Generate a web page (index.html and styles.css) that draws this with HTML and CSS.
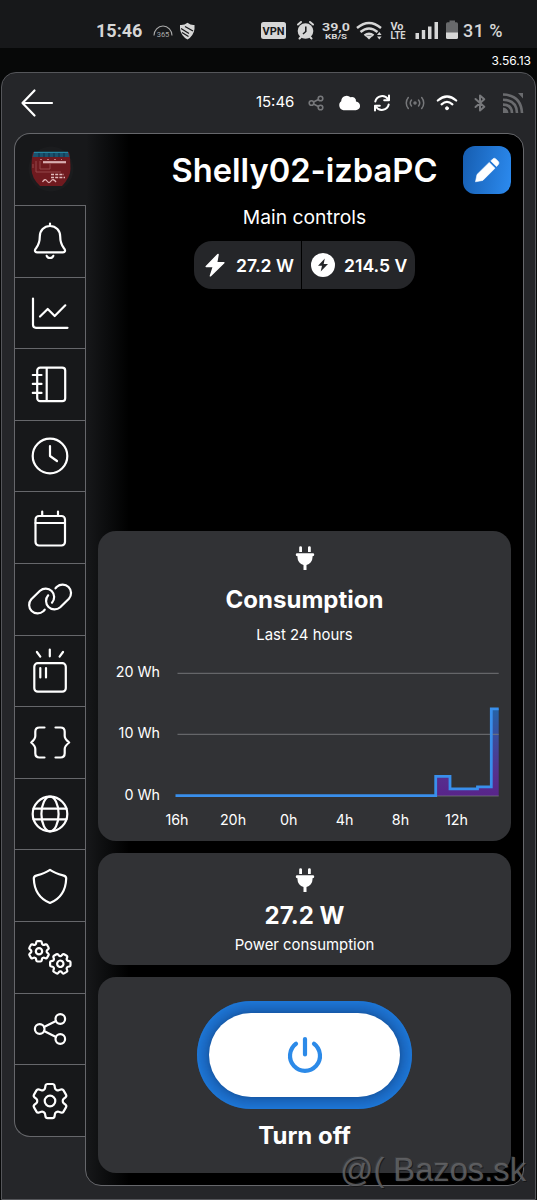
FILE: index.html
```html
<!DOCTYPE html>
<html lang="en">
<head>
<meta charset="utf-8">
<title>Shelly02-izbaPC</title>
<link rel="stylesheet" href="styles.css">
</head>
<body>
<svg width="0" height="0" class="defs" aria-hidden="true">
  <symbol id="gear" viewBox="0 0 24 24" overflow="visible">
    <path vector-effect="non-scaling-stroke" d="M9.594 3.94c.09-.542.56-.94 1.11-.94h2.593c.55 0 1.02.398 1.11.94l.213 1.281c.063.374.313.686.645.87.074.04.147.083.22.127.325.196.72.257 1.075.124l1.217-.456a1.125 1.125 0 0 1 1.37.49l1.296 2.247a1.125 1.125 0 0 1-.26 1.431l-1.003.827c-.293.241-.438.613-.43.992a7.723 7.723 0 0 1 0 .255c-.008.378.137.75.43.991l1.004.827c.424.35.534.955.26 1.43l-1.298 2.247a1.125 1.125 0 0 1-1.369.491l-1.217-.456c-.355-.133-.75-.072-1.076.124a6.47 6.47 0 0 1-.22.128c-.331.183-.581.495-.644.869l-.213 1.281c-.09.543-.56.94-1.11.94h-2.594c-.55 0-1.019-.398-1.11-.94l-.213-1.281c-.062-.374-.312-.686-.644-.87a6.52 6.52 0 0 1-.22-.127c-.325-.196-.72-.257-1.076-.124l-1.217.456a1.125 1.125 0 0 1-1.369-.49l-1.297-2.247a1.125 1.125 0 0 1 .26-1.431l1.004-.827c.292-.24.437-.613.43-.991a6.932 6.932 0 0 1 0-.255c.007-.38-.138-.751-.43-.992l-1.004-.827a1.125 1.125 0 0 1-.26-1.43l1.297-2.247a1.125 1.125 0 0 1 1.37-.491l1.216.456c.356.133.751.072 1.076-.124.072-.044.146-.086.22-.128.332-.183.582-.495.644-.869l.214-1.28Z"/>
    <circle vector-effect="non-scaling-stroke" cx="12" cy="12" r="2.8"/>
  </symbol>
  <symbol id="plug" viewBox="0 0 24 24">
    <path d="M6.2 6V1.600a1.400 1.400 0 0 1 2.800 0V6zM15 6V1.600a1.400 1.400 0 0 1 2.800 0V6zM4.200 7.300H19.800a1.450 1.450 0 0 1 0 2.900H19.500V11.500A7.500 7.500 0 0 1 13.500 18.900V24H10.500V18.900A7.500 7.500 0 0 1 4.500 11.500V10.200H4.200a1.450 1.450 0 0 1 0-2.900z"/>
  </symbol>
</svg>

<div class="statusbar">
  <span class="clock">15:46</span>
  <svg class="status-left" width="44" height="20" viewBox="0 0 44 20">
    <path d="M2 14.500A9 9.500 0 0 1 20 14.500" fill="none" stroke="#aaa" stroke-width="1.100"/>
    <text x="11" y="16.200" text-anchor="middle" class="tiny">365</text>
    <path d="M28 4Q32 4.500 35.500 1.800Q39 4.500 42.500 4V8Q41.500 15 35.500 18.500Q29 15 28 8Z" fill="#d6d6d6"/>
    <path d="M29 7.500L37 12.500M33 5.500L41 10M30 11.500L36.500 15.500" stroke="#17181a" stroke-width="1.300"/>
  </svg>
  <svg class="status-right" width="200" height="24" viewBox="260 19 200 24">
    <rect x="261" y="22" width="25" height="17" rx="2.500" fill="#d6d6d6"/>
    <text x="273.500" y="35" text-anchor="middle" class="vpn">VPN</text>
    <g fill="none" stroke="#d6d6d6" stroke-width="2" stroke-linecap="round">
      <path d="M298 24.500L301 22M313 24.500L310 22M299.500 38.500L301 37M311.500 38.500L310 37"/>
    </g>
    <circle cx="305.500" cy="31" r="7.800" fill="#d6d6d6"/>
    <path d="M305.800 26.500V31.500L303 34" fill="none" stroke="#17181a" stroke-width="1.500"/>
    <text x="336" y="30.500" text-anchor="middle" class="rate" textLength="28" lengthAdjust="spacingAndGlyphs">39,0</text>
    <text x="336" y="39.300" text-anchor="middle" class="rate-unit" textLength="22" lengthAdjust="spacingAndGlyphs">KB/S</text>
    <g fill="none" stroke="#d6d6d6" stroke-width="2.400">
      <path d="M357 28Q369 18 381 28M360.500 32Q369 25 377.500 32M364.500 35.500Q369 32 373.500 35.500"/>
    </g>
    <path d="M365 35.500H373L369 39.500ZM377 35L379.300 32L381.600 35ZM377 36.500L379.300 39.500L381.600 36.500Z" fill="#d6d6d6"/>
    <text x="397" y="30" text-anchor="middle" class="lte" textLength="13" lengthAdjust="spacingAndGlyphs">Vo</text>
    <text x="398" y="39.200" text-anchor="middle" class="lte" textLength="15" lengthAdjust="spacingAndGlyphs">LTE</text>
    <path d="M415.500 33H419V39H415.500ZM421.800 30H425.200V39H421.800ZM428 26.500H431.500V39H428ZM434.500 22H438V39H434.500Z" fill="#d6d6d6"/>
    <path d="M449.500 20.500H455V22.300H456.500Q458 22.300 458 24V33H446V24Q446 22.300 447.500 22.300H449.500Z" fill="#68696b"/>
    <path d="M446 32.500H458V37.500Q458 39 456.500 39H447.500Q446 39 446 37.500Z" fill="#d6d6d6"/>
  </svg>
  <span class="battery">31 %</span>
</div>

<div class="version">3.56.13</div>

<div class="sheet">
  <header class="topbar">
    <svg width="34" height="30" viewBox="0 0 34 30" class="line"><path stroke-width="2.200" d="M32 15H2.500M14.500 2.500L2.500 15L14.500 27.500"/></svg>
    <div class="indicators">
      <span class="time">15:46</span>
      <svg viewBox="0 0 24 24" class="line dim"><g stroke-width="1.600"><circle cx="7.500" cy="12" r="2.300"/><circle cx="16.500" cy="7.500" r="2.300"/><circle cx="16.500" cy="16.500" r="2.300"/><path d="M9.500 11L14.400 8.500M9.500 13L14.400 15.500"/></g></svg>
      <svg viewBox="0 0 24 24" class="solid"><path d="M6.500 19.200A5 5 0 0 1 4.200 10.300A5.500 5.500 0 0 1 13.500 6.300A4 4 0 0 1 19 10.600A4.300 4.300 0 0 1 18.500 19.200Z"/></svg>
      <svg viewBox="0 0 24 24" class="line"><g stroke-width="2"><path d="M5.300 10.500A7 7 0 0 1 18 8.300M18.700 13.500A7 7 0 0 1 6 15.700"/><path d="M19 4.500V9.300H14.200M5 19.500V14.700H9.800"/></g></svg>
      <svg viewBox="0 0 24 24" class="line dim"><g stroke-width="1.500"><path d="M5.300 6.500A8.500 8.500 0 0 0 5.300 17.500M18.700 6.500A8.500 8.500 0 0 1 18.700 17.500M8.500 9A4.700 4.700 0 0 0 8.500 15M15.500 9A4.700 4.700 0 0 1 15.500 15"/><circle cx="12" cy="12" r="1"/></g></svg>
      <svg viewBox="0 0 24 24" class="line"><g stroke-width="2.200"><path d="M2.800 9.500Q12 1.500 21.200 9.500M6.600 13.300Q12 8.600 17.400 13.300"/></g><circle cx="12" cy="17.300" r="1.500" class="fillwhite"/></svg>
      <svg viewBox="0 0 24 24" class="line dim"><path stroke-width="2" d="M7.500 8L16.300 15.800L12 19.500V4.500L16.300 8.200L7.500 16"/></svg>
      <svg viewBox="0 0 24 24" class="rss"><g fill="none" stroke="#6a6b6e" stroke-width="2.600"><path d="M2 3.500Q20 4 21 22M2 8.800Q15.500 9 16 22M2 13.600Q10.500 13.500 11 22"/></g><path fill="#6a6b6e" d="M2 16.500Q7 17 7.500 22H2ZM17 2H22V7.500Z"/></svg>
    </div>
  </header>

  <div class="device">
    <nav class="rail">
      <div class="avatar">
        <svg width="48" height="48" viewBox="0 0 48 48">
          <circle cx="24" cy="24" r="22.500" fill="#1b1c1e"/>
          <path d="M6 7H42Q43.500 13 43.500 24Q43.500 32 35 41H13Q4.500 33 4.500 24Q4.500 13 6 7Z" fill="#6f1a1f"/>
          <path d="M7 7H41L42.500 12H5.500Z" fill="#1c536e"/>
          <path d="M7 7.300H41" stroke="#2791ad" stroke-width="1"/>
          <path d="M12 8V12M17 8V12M22 8V12M27 8V12M32 8V12M37 8V12" stroke="#123b55" stroke-width="1.500"/>
          <path d="M16 17.200H39" stroke="#d9adb0" stroke-width="2.200"/>
          <path d="M13 14.500H35" stroke="#bd767a" stroke-width="1" stroke-dasharray="2 5"/>
          <path d="M9 16V27H34M13 16V24H23V18M6 19V23" fill="none" stroke="#94474b" stroke-width="1"/>
          <path d="M24 29.500H37M24 32.500H38" stroke="#e0bcbd" stroke-width="1.700" stroke-dasharray="3 1.200"/>
          <path d="M15.500 37Q18 33 20 36T24 36T29 37" fill="none" stroke="#dfb2b4" stroke-width="1.300"/>
        </svg>
      </div>
      <a class="tab"><svg viewBox="0 0 48 48"><path d="M24 6.500V9M24 9C18 9 13.800 13.500 13.800 19.500C13.800 26 12.500 28 10.200 31C8 33.500 9 35.300 11 35.300H37C39 35.300 40 33.500 37.800 31C35.500 28 34.200 26 34.200 19.500C34.200 13.500 30 9 24 9ZM20.700 38.800A3.500 3.300 0 0 0 27.300 38.800"/></svg></a>
      <a class="tab"><svg viewBox="0 0 48 48"><path d="M7 9.500V35.800Q7 38.800 10 38.800H41.500M14 27.500L21.700 20L28.700 27L39.300 16.300"/></svg></a>
      <a class="tab"><svg viewBox="0 0 48 48"><rect x="11.200" y="7.600" width="28" height="33.600" rx="3"/><path d="M20.700 8V41M6.800 15H15.500M6.800 23.900H15.500M6.800 32.900H15.500"/></svg></a>
      <a class="tab"><svg viewBox="0 0 48 48"><circle cx="24" cy="24" r="17.300"/><path d="M24 14V24L31 29"/></svg></a>
      <a class="tab"><svg viewBox="0 0 48 48"><rect x="9.500" y="12" width="29.500" height="29.500" rx="3.500"/><path d="M9.500 19H39M16.200 7.500V12M32 7.500V12"/></svg></a>
      <a class="tab"><svg viewBox="0 0 48 48"><path d="M18.700 34.700L17.300 36.300A8.500 8.500 0 0 1 5.300 24.300L14 15.700A8.500 8.500 0 0 1 26 27.700M29.500 13.300L30.900 11.700A8.500 8.500 0 0 1 42.900 23.700L34.200 32.300A8.500 8.500 0 0 1 22.200 20.300"/></svg></a>
      <a class="tab"><svg viewBox="0 0 48 48"><rect x="8.300" y="16.200" width="31.500" height="28.500" rx="3.500"/><path d="M14.300 21V30.500M20 21V30.500M23.800 2.500V9.300M10.900 5L14.300 9.700M37 5L33.600 9.700"/></svg></a>
      <a class="tab"><svg viewBox="0 0 48 48"><path d="M18.500 9.500H13.500Q9.300 9.500 9.300 13.700V18Q9.300 21 5.200 24.500Q9.300 28 9.300 31V35.300Q9.300 39.500 13.500 39.500H18.500M29.500 9.500H34.500Q38.700 9.500 38.700 13.700V18Q38.700 21 43.200 24.500Q38.700 28 38.700 31V35.300Q38.700 39.500 34.500 39.500H29.500"/></svg></a>
      <a class="tab"><svg viewBox="0 0 48 48"><circle cx="24" cy="24" r="17.300"/><ellipse cx="24" cy="24" rx="8.600" ry="17.300"/><path d="M7.500 18.700H40.500M7.500 29.300H40.500"/></svg></a>
      <a class="tab"><svg viewBox="0 0 48 48"><path d="M24 7.800C19 11.200 14 12.500 10.200 13.600Q7.800 14.300 7.800 16.500C8.200 28 14 37 24 41C34 37 39.800 28 40.200 16.500Q40.200 14.300 37.800 13.600C34 12.500 29 11.200 24 7.800Z"/></svg></a>
      <a class="tab"><svg viewBox="0 0 48 48"><use href="#gear" x="-.6" y="4.700" width="27.200" height="27.200"/><g transform="rotate(30 34.300 30.800)"><use href="#gear" x="20.700" y="17.200" width="27.200" height="27.200"/></g></svg></a>
      <a class="tab"><svg viewBox="0 0 48 48"><circle cx="13.700" cy="24" r="4.800"/><circle cx="34.300" cy="14" r="4.800"/><circle cx="34.300" cy="34" r="4.800"/><path d="M18 21.900L30 16.100M18 26.100L30 31.900"/></svg></a>
      <a class="tab last"><svg viewBox="0 0 48 48"><use href="#gear" x="1.300" y="1.300" width="45.400" height="45.400"/></svg></a>
    </nav>

    <main class="panel">
      <div class="heading">
        <h1>Shelly02-izbaPC</h1>
        <button class="edit"><svg width="28" height="28" viewBox="0 0 28 28"><path fill="#fff" stroke="#fff" stroke-width=".6" stroke-linejoin="round" d="M2.500 25.800L4 18.500L16.200 6.400L22 12.200L9.800 24.400ZM17.800 4.900L19.800 2.900Q21.300 1.600 22.800 2.900L25.300 5.400Q26.700 7 25.300 8.600L23.500 10.600Z"/></svg></button>
      </div>
      <p class="subtitle">Main controls</p>
      <div class="meters">
        <div class="meter first"><svg width="24" height="24" viewBox="0 0 24 24"><path fill="#fff" stroke="#fff" stroke-width="1.600" stroke-linejoin="round" d="M15 1.500L3.300 13.500H10.500L7.500 22.800L20.800 9.800H13.500Z"/></svg><span>27.2 W</span></div>
        <div class="meter second"><svg width="24" height="24" viewBox="0 0 24 24"><circle cx="12" cy="12" r="12" fill="#fff"/><path fill="#252629" d="M13.800 5.500L7 12.800H11L9.700 18.500L17 11H12.700Z"/></svg><span>214.5 V</span></div>
      </div>

      <section class="card consumption">
        <svg class="plug" width="24" height="24"><use href="#plug"/></svg>
        <h2>Consumption</h2>
        <p>Last 24 hours</p>
        <svg class="chart" width="413" height="180" viewBox="98 660 413 180">
          <defs><linearGradient id="usage" gradientUnits="userSpaceOnUse" x1="0" y1="708" x2="0" y2="796"><stop offset="0" stop-color="#2464a8"/><stop offset=".75" stop-color="#56308e"/><stop offset="1" stop-color="#58248a"/></linearGradient></defs>
          <path fill="url(#usage)" d="M435.500 796V776.300H450V788.800H477.500V786.800H491.300V708.700H498.700V796Z"/>
          <path stroke="#77787b" stroke-opacity=".75" stroke-width="1.200" d="M177.500 673.400H498.700M177.500 734.400H498.700M177.500 796H498.700"/>
          <path fill="none" stroke="#398fec" stroke-width="2.800" d="M175.500 795.600H435.700V776.300H450V788.800H477.500V786.800H491.300V708.900H498.700"/>
          <g text-anchor="end"><text x="160" y="677.200">20 Wh</text><text x="160" y="738.400">10 Wh</text><text x="160" y="800">0 Wh</text></g>
          <g text-anchor="middle"><text x="177" y="825.200">16h</text><text x="233" y="825.200">20h</text><text x="288.700" y="825.200">0h</text><text x="344.500" y="825.200">4h</text><text x="400.500" y="825.200">8h</text><text x="456.500" y="825.200">12h</text></g>
        </svg>
      </section>

      <section class="card power">
        <svg class="plug" width="24" height="24"><use href="#plug"/></svg>
        <h2>27.2 W</h2>
        <p>Power consumption</p>
      </section>

      <section class="card switch">
        <button class="toggle"><span class="knob"><svg width="40" height="40" viewBox="0 0 40 40"><path fill="none" stroke="#2c8ae8" stroke-width="4.200" stroke-linecap="round" d="M20 4V19.500M11 8.800A15 15 0 1 0 29 8.800"/></svg></span></button>
        <h2>Turn off</h2>
      </section>
    </main>
  </div>
</div>
<div class="watermark">@( Bazos.sk</div>
</body>
</html>
```
FILE: styles.css
```css
* { box-sizing: border-box; }
body { margin: 0; width: 537px; height: 1200px; overflow: hidden; position: relative; background: #070808; color: #fff; font-family: Inter, sans-serif; display: flex; flex-direction: column; }
.defs { position: absolute; }
h1, h2, p { margin: 0; }
button { border: 0; padding: 0; }

.statusbar { height: 48px; flex: none; background: #17181a; display: flex; align-items: flex-end; padding: 0 30px 5px 96px; color: #d6d6d6; font: 700 18px/24px Roboto, sans-serif; }
.clock { width: 56px; }
.status-left { margin-bottom: 2px; }
.status-right { margin-left: 64px; margin-bottom: 0; flex: none; }
.battery { margin-left: 3px; font-weight: 500; white-space: nowrap; letter-spacing: .4px; }
.tiny { font: 7.5px Roboto, sans-serif; fill: #aaa; }
.vpn { font: 700 11px Roboto, sans-serif; fill: #17181a; }
.rate { font: 700 11px Roboto, sans-serif; fill: #d6d6d6; }
.rate-unit { font: 700 8px Roboto, sans-serif; fill: #d6d6d6; }
.lte { font: 700 10px Roboto, sans-serif; fill: #d6d6d6; }

.version { height: 24px; flex: none; padding-right: 6px; text-align: right; font-size: 12px; line-height: 26px; }

.sheet { flex: 1; margin: 0 1px 0 1px; border: 1.500px solid #55565a; border-radius: 15px 15px 0 0; background: #252629; padding: 0 11px 0 12px; }
.topbar { height: 60px; display: flex; align-items: center; justify-content: space-between; padding: 0 0 0 6px; }
.line { fill: none; stroke: #fff; stroke-linecap: round; stroke-linejoin: round; }
.dim { stroke: #77787b; }
.solid, .line .fillwhite { fill: #fff; }
.indicators { display: flex; align-items: center; gap: 8.800px; margin-right: -1px; }
.indicators svg { width: 24px; height: 24px; }
.time { font-size: 15px; margin-right: 1px; line-height: 20px; margin-top: -2px; }

.device { display: flex; align-items: flex-start; height: 1053px; }
.rail { width: 71px; flex: none; }
.avatar { position: relative; z-index: 1; height: 72px; width: 73px; border: solid #66676b; border-width: 1px 0 0 1px; border-radius: 16px 0 0 0; background: #17181a; padding: 11px 0 0 12px; }
.tab { display: grid; place-items: center; height: 71.600px; border: solid #66676b; border-width: 1px 0 0 1px; background: #17181a; }
.tab svg { width: 48px; height: 48px; fill: none; stroke: #fff; stroke-width: 2.200; stroke-linecap: round; stroke-linejoin: round; overflow: visible; }
.tab.last { border-bottom-width: 1px; border-bottom-left-radius: 16px; height: 73px; }

.panel { flex: 1; height: 1053px; border: 1px solid #66676b; border-radius: 0 16px 16px 16px; background: linear-gradient(90deg, #17181a 0, #0b0c0d 22px, #000 43px); padding: 12px; display: flex; flex-direction: column; gap: 12px; }
.heading { display: grid; grid-template-columns: 48px 1fr 48px; align-items: center; flex: none; height: 48px; }
.heading h1 { grid-column: 2; justify-self: center; white-space: nowrap; font-weight: 600; font-size: 32.700px; line-height: 48px; }
.edit { width: 48px; height: 48px; border-radius: 12px; background: linear-gradient(100deg, #165db0, #2c8bf0); display: grid; place-items: center; }
.subtitle { text-align: center; font-size: 19.300px; line-height: 23px; }
.meters { display: flex; justify-content: center; gap: 1px; margin-bottom: auto; font-size: 17.600px; font-weight: 600; }
.meter { height: 48px; background: #252629; display: flex; align-items: center; padding: 0 7px 0 9px; gap: 9px; white-space: nowrap; }
.first { width: 107px; border-radius: 18px 0 0 18px; }
.second { width: 113px; border-radius: 0 18px 18px 0; }

.card { background: #313235; border-radius: 18px; flex: none; display: flex; flex-direction: column; align-items: center; padding-top: 15px; }
.card h2 { font-size: 24px; line-height: 32px; font-weight: 700; }
.card p { font-size: 14.900px; line-height: 20px; }
.plug { fill: #fff; }
.consumption { height: 310px; }
.consumption h2 { margin-top: 14px; }
.consumption p { margin-top: 9px; }
.chart { margin-top: 15px; font-size: 14.300px; fill: #fff; }
.power { height: 112px; }
.power h2 { margin-top: 8px; }
.power p { margin-top: 3px; }
.switch { height: 196px; padding-top: 24px; }
.switch h2 { margin-top: 11px; }
.toggle { width: 215px; height: 108px; border-radius: 54px; padding: 12px; background: #1d6fca; box-shadow: inset 0 0 6px #1f7ee2; }
.knob { height: 84px; border-radius: 42px; background: #fff; display: grid; place-items: center; box-shadow: 0 0 8px rgba(0, 25, 70, .5); }

.watermark { position: absolute; right: 11px; top: 1151px; font: 32.700px/38px "Liberation Sans", sans-serif; color: rgba(105, 106, 109, .8); text-shadow: 1px 1px 0 rgba(15, 15, 16, .6), -1px -1px 0 rgba(130, 130, 130, .15); white-space: nowrap; }
```
